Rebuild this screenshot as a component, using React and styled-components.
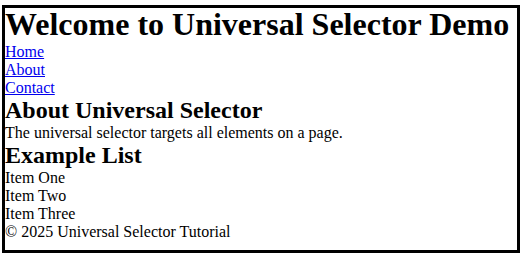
import React from 'react';
import styled, { createGlobalStyle } from 'styled-components';

const GlobalStyle = createGlobalStyle`
  * {
    margin: 0;
    padding: 0;
    box-sizing: border-box;
  }

  body {
    font-family: 'Liberation Serif', 'Times New Roman', serif;
    font-size: 16px;
    color: #000;
    background: #fff;
  }
`;

const Page = styled.div`
  margin: 5px 8px 0 2px;
  width: 518px;
  height: 248px;
  border: 3px solid #000;
`;

const Title = styled.h1`
  margin-top: -2px;
  font-size: 32px;
  font-weight: bold;
`;

const Nav = styled.nav`
  display: flex;
  flex-direction: column;
`;

const NavLink = styled.a`
  color: #0000ee;
  text-decoration: underline;
`;

const SectionTitle = styled.h2`
  font-size: 24px;
  font-weight: bold;
`;

const ItemList = styled.ul`
  list-style: none;
`;

const Footer = styled.footer`
  font-size: 16px;
`;

const links = ['Home', 'About', 'Contact'];
const items = ['Item One', 'Item Two', 'Item Three'];

const App = () => {
  return (
    <>
      <GlobalStyle />
      <Page>
        <header>
          <Title>Welcome to Universal Selector Demo</Title>
          <Nav>
            {links.map((link) => (
              <NavLink key={link} href="#">
                {link}
              </NavLink>
            ))}
          </Nav>
        </header>
        <main>
          <section>
            <SectionTitle>About Universal Selector</SectionTitle>
            <p>The universal selector targets all elements on a page.</p>
          </section>
          <section>
            <SectionTitle>Example List</SectionTitle>
            <ItemList>
              {items.map((item) => (
                <li key={item}>{item}</li>
              ))}
            </ItemList>
          </section>
        </main>
        <Footer>&copy; 2025 Universal Selector Tutorial</Footer>
      </Page>
    </>
  );
};

export default App;
